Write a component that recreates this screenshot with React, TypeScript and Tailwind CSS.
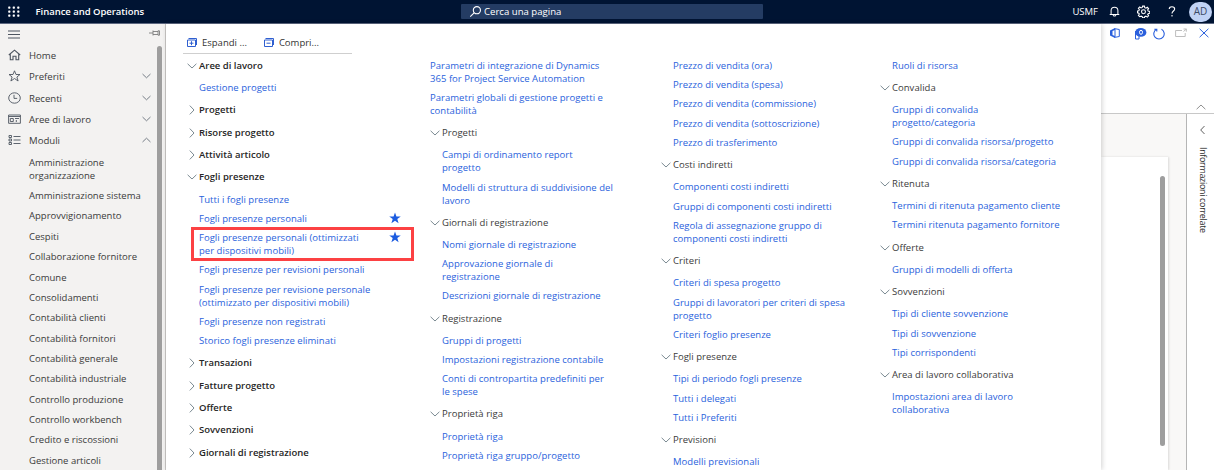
import React from "react";

type Entry = { text: string; starred?: boolean; boxed?: boolean };
type Group = { title?: string; open?: boolean; links?: Entry[] };

const link = (text: string): Entry => ({ text });

const workspaceGroups: Group[] = [
  { title: "Aree di lavoro", open: true, links: [link("Gestione progetti")] },
  { title: "Progetti" },
  { title: "Risorse progetto" },
  { title: "Attività articolo" },
  {
    title: "Fogli presenze",
    open: true,
    links: [
      link("Tutti i fogli presenze"),
      { text: "Fogli presenze personali", starred: true },
      { text: "Fogli presenze personali (ottimizzati\nper dispositivi mobili)", starred: true, boxed: true },
      link("Fogli presenze per revisioni personali"),
      link("Fogli presenze per revisione personale\n(ottimizzato per dispositivi mobili)"),
      link("Fogli presenze non registrati"),
      link("Storico fogli presenze eliminati"),
    ],
  },
  { title: "Transazioni" },
  { title: "Fatture progetto" },
  { title: "Offerte" },
  { title: "Sovvenzioni" },
  { title: "Giornali di registrazione" },
];

const setupGroups: Group[] = [
  {
    title: "Progetti",
    open: true,
    links: [link("Campi di ordinamento report\nprogetto"), link("Modelli di struttura di suddivisione del\nlavoro")],
  },
  {
    title: "Giornali di registrazione",
    open: true,
    links: [
      link("Nomi giornale di registrazione"),
      link("Approvazione giornale di\nregistrazione"),
      link("Descrizioni giornale di registrazione"),
    ],
  },
  {
    title: "Registrazione",
    open: true,
    links: [
      link("Gruppi di progetti"),
      link("Impostazioni registrazione contabile"),
      link("Conti di contropartita predefiniti per\nle spese"),
    ],
  },
  { title: "Proprietà riga", open: true, links: [link("Proprietà riga"), link("Proprietà riga gruppo/progetto")] },
];

const priceGroups: Group[] = [
  {
    links: [
      link("Prezzo di vendita (ora)"),
      link("Prezzo di vendita (spesa)"),
      link("Prezzo di vendita (commissione)"),
      link("Prezzo di vendita (sottoscrizione)"),
      link("Prezzo di trasferimento"),
    ],
  },
  {
    title: "Costi indiretti",
    open: true,
    links: [
      link("Componenti costi indiretti"),
      link("Gruppi di componenti costi indiretti"),
      link("Regola di assegnazione gruppo di\ncomponenti costi indiretti"),
    ],
  },
  {
    title: "Criteri",
    open: true,
    links: [
      link("Criteri di spesa progetto"),
      link("Gruppi di lavoratori per criteri di spesa\nprogetto"),
      link("Criteri foglio presenze"),
    ],
  },
  {
    title: "Fogli presenze",
    open: true,
    links: [link("Tipi di periodo fogli presenze"), link("Tutti i delegati"), link("Tutti i Preferiti")],
  },
  { title: "Previsioni", open: true, links: [link("Modelli previsionali")] },
];

const validationGroups: Group[] = [
  { links: [link("Ruoli di risorsa")] },
  {
    title: "Convalida",
    open: true,
    links: [
      link("Gruppi di convalida\nprogetto/categoria"),
      link("Gruppi di convalida risorsa/progetto"),
      link("Gruppi di convalida risorsa/categoria"),
    ],
  },
  {
    title: "Ritenuta",
    open: true,
    links: [link("Termini di ritenuta pagamento cliente"), link("Termini ritenuta pagamento fornitore")],
  },
  { title: "Offerte", open: true, links: [link("Gruppi di modelli di offerta")] },
  {
    title: "Sovvenzioni",
    open: true,
    links: [link("Tipi di cliente sovvenzione"), link("Tipi di sovvenzione"), link("Tipi corrispondenti")],
  },
  {
    title: "Area di lavoro collaborativa",
    open: true,
    links: [link("Impostazioni area di lavoro\ncollaborativa")],
  },
];

const modules = [
  "Amministrazione\norganizzazione",
  "Amministrazione sistema",
  "Approvvigionamento",
  "Cespiti",
  "Collaborazione fornitore",
  "Comune",
  "Consolidamenti",
  "Contabilità clienti",
  "Contabilità fornitori",
  "Contabilità generale",
  "Contabilità industriale",
  "Controllo produzione",
  "Controllo workbench",
  "Credito e riscossioni",
  "Gestione articoli",
];

const turns = { down: "", up: "rotate-180", right: "-rotate-90", left: "rotate-90" };

function Chevron({ turn, className = "" }: { turn: keyof typeof turns; className?: string }) {
  return (
    <svg viewBox="0 0 10 6" className={`shrink-0 ${turns[turn]} ${className}`} fill="none" stroke="currentColor">
      <path d="M0.6 0.8 5 5 9.4 0.8" />
    </svg>
  );
}

function LinkRow({ entry }: { entry: Entry }) {
  return (
    <li className="relative pb-[6.4px] tracking-[0.03px] whitespace-pre text-[#2a62dc]">
      <a>{entry.text}</a>
      {entry.starred && (
        <svg viewBox="0 0 24 24" className="absolute -top-[1px] left-[189.5px] h-[12px] w-[12px] fill-[#1c5ce0]">
          <path d="m12 .8 2.9 8h8.6l-6.900 5.200 2.600 8.700L12 17.500l-7.200 5.200 2.600-8.700L.5 8.800h8.600z" />
        </svg>
      )}
      {entry.boxed && <span className="absolute -top-[5px] -left-[8px] h-[34px] w-[223px] border-[3px] border-[#fc4143]" />}
    </li>
  );
}

function GroupBlock({ group, strong }: { group: Group; strong?: boolean }) {
  return (
    <section>
      {group.title && (
        <h3 className={`flex h-[22.33px] items-start ${strong ? "font-semibold text-[#262626]" : "font-medium tracking-[0.03px] text-[#3b3b3b]"}`}>
          <span className="-ml-[12px] flex h-[12px] w-[12px] items-center text-[#7b8a92]">
            {group.open ? (
              <Chevron turn="down" className="h-[6px] w-[10px]" />
            ) : (
              <Chevron turn="right" className="h-[6px] w-[10px]" />
            )}
          </span>
          {group.title}
        </h3>
      )}
      {group.links && (
        <ul className="pb-[2.75px]">
          {group.links.map((entry) => (
            <LinkRow key={entry.text} entry={entry} />
          ))}
        </ul>
      )}
    </section>
  );
}

function Header() {
  return (
    <header className="flex h-[24px] shrink-0 items-center border-b border-[#5c6780] bg-[#001433] text-white">
      <svg viewBox="0 0 12 11" className="ml-[8px] h-[11px] w-[12px] fill-white">
        {[0.5, 4.5, 8.5].map((y) =>
          [0.2, 4.7, 9.2].map((x) => <rect key={`${x}-${y}`} x={x} y={y} width="2.2" height="2.2" rx="0.6" />),
        )}
      </svg>
      <div className="ml-[15.5px] w-[425px] pt-[2px] text-[9.5px] font-semibold tracking-[-0.03px]">Finance and Operations</div>
      <div className="flex h-[15px] w-[302px] items-center rounded-[1px] bg-[#243c63] pl-[8.5px] text-[9.6px] font-medium">
        <svg viewBox="0 0 13 12" className="mr-[2px] h-[11px] w-[13px]" fill="none" stroke="white" strokeWidth="1.2">
          <circle cx="8" cy="4.6" r="3.9" />
          <path d="M5.2 7.3.8 11.5" />
        </svg>
        <span className="pt-[2px]">Cerca una pagina</span>
      </div>
      <div className="ml-auto flex items-center">
        <span className="pt-[2px] text-[9.5px] font-medium">USMF</span>
        <svg viewBox="0 0 12 12" className="ml-[11px] h-[11px] w-[11px]" fill="none" stroke="white" strokeWidth="1.1">
          <path d="M.8 9.3h10.4M2.3 9.2V5a3.7 3.7 0 0 1 7.4 0v4.2M4.5 9.5a1.5 1.5 0 0 0 3 0" />
        </svg>
        <svg viewBox="0 0 24 24" className="ml-[17px] h-[13px] w-[13px]" fill="none" stroke="white" strokeWidth="2">
          <path d="m10.3 2 3.4 0 .6 3 2.2.9 2.5-1.7 2.4 2.4-1.700 2.5.9 2.2 3 .6v3.4l-3 .6-.9 1.5 1.7 2.5-2.4 2.4-2.5-1.7-2.2.9-.6 2h-3.4l-.6-2-2.2-.9L5 21.5l-2.4-2.4 1.7-2.5-.9-1.5-2.4-.6v-3.4l2.4-.6.9-2.2L2.6 6 5 3.6l2.5 1.700 2.2-.9z" />
          <circle cx="12" cy="12.500" r="3.600" />
        </svg>
        <svg viewBox="0 0 8 12" className="ml-[18px] h-[11px] w-[8px]" fill="none" stroke="white" strokeWidth="1.2">
          <path d="M1 3.3C1 1.6 2.2.8 3.9.8 5.7.8 6.9 1.7 6.9 3.2c0 2.2-2.9 2.4-2.9 5M4 9.9v1.5" />
        </svg>
        <span className="mr-[2px] ml-[13px] flex h-[20px] w-[23px] items-center justify-center rounded-full bg-[#c0d2f5] text-[10px] text-[#3c4a66]">
          AD
        </span>
      </div>
    </header>
  );
}

const navIcons: Record<string, React.ReactNode> = {
  Home: <path strokeWidth="1.1" d="M.8 6 6.500 1.200 12.200 6M2.300 5v5.700h2.700V7.200h3v3.500h2.700V5" />,
  Preferiti: <path d="m6.500.8 1.500 3.700h4L8.900 7l1.200 4-3.600-2.500L2.900 11l1.200-4L1 4.500h4z" />,
  Recenti: (
    <>
      <ellipse cx="6.500" cy="6" rx="5.800" ry="5.200" />
      <path d="M6 2.800v3.600h3.200" />
    </>
  ),
  "Aree di lavoro": (
    <>
      <path d="M.6 2h11.800v8.300H.6zM.6 3.500h11.800" />
      <path d="M2.300 5.500h3v3h-3zM7 5.500h4M8.300 7v2" />
    </>
  ),
  Moduli: <path d="M1 1.500h2.500v2H1zM1 5h2.500v2H1zM1 8.500h2.500v2H1zM5.500 2.500h7M5.500 6h7M5.500 9.500h7" />,
};

function Sidebar() {
  return (
    <aside className="flex w-[166px] shrink-0 border-r border-[#c9c7c5] bg-[#f3f2f1] text-[#3a3a3a]">
      <div className="flex w-[157px] flex-col">
        <div className="flex h-[20.5px] shrink-0 items-start justify-between pl-[8px]">
          <svg viewBox="0 0 12 9" className="mt-[6px] h-[9px] w-[12px]" stroke="#4d5560">
            <path d="M0 1h12M0 4.500h12M0 8h12" />
          </svg>
          <svg viewBox="0 0 11 6" className="mt-[6px] -mr-[3px] h-[6px] w-[11px]" fill="none" stroke="#7d7d7d" strokeWidth="0.9">
            <path d="M0 3h4M4 .5v5M4 1.500h5M4 4.500h5M9 .8v4.400h1.500V.8z" />
          </svg>
        </div>
        <nav className="shrink-0 text-[9.6px]">
          {Object.entries(navIcons).map(([name, icon]) => (
            <div key={name} className="flex h-[21.3px] items-center pl-[8px]">
              <svg viewBox="0 0 13 12" className="h-[12px] w-[13px]" fill="none" stroke="#4d5560" strokeWidth="0.9">
                {icon}
              </svg>
              <span className="ml-[8px] flex-1 pt-[2px]">{name}</span>
              {name !== "Home" && <Chevron turn={name === "Moduli" ? "up" : "down"} className="mr-[6px] h-[6px] w-[9px] text-[#68717a]" />}
            </div>
          ))}
        </nav>
        <ul className="pt-[4.8px] pl-[29px] text-[9.5px] leading-[13px]">
          {modules.map((name) => (
            <li key={name} className="pb-[7.35px] whitespace-pre">
              {name}
            </li>
          ))}
        </ul>
      </div>
      <div className="mt-[22px] w-[5px] rounded-t-full bg-[#9e9e9e]" />
    </aside>
  );
}

function TreeAction({ label, plus }: { label: string; plus?: boolean }) {
  return (
    <div className="flex items-center gap-[5px]">
      <svg viewBox="0 0 10 9" className="h-[9px] w-[10px]" fill="none" stroke="#2f5fd0">
        <path d="M.5 2h8v6.500h-8zM1.500.5h8V7M2.500 5.200h4" />
        {plus && <path d="M4.500 3.200v4" />}
      </svg>
      <span className="pt-[3px]">{label}</span>
    </div>
  );
}

function MenuPanel() {
  return (
    <main className="z-10 w-[935px] shrink-0 bg-white shadow-[1px_0_5px_rgba(0,0,0,0.18)]">
      <div className="ml-[17px] flex h-[30px] w-[169px] items-center gap-[17px] border-b-[1.5px] border-[#cfcfcf] pt-[7px] pl-[4px] text-[9.5px] font-medium text-[#333]">
        <TreeAction label="Espandi ..." plus />
        <TreeAction label="Compri..." />
      </div>
      <div className="grid grid-cols-[243px_231px_219px_1fr] pt-[5.8px] pl-[33px] text-[9.5px] leading-[12.92px]">
        <div>
          {workspaceGroups.map((group) => (
            <GroupBlock key={group.title} group={group} strong />
          ))}
        </div>
        <div>
          <ul className="-ml-[12px] pb-[2.75px]">
            <LinkRow entry={link("Parametri di integrazione di Dynamics\n365 for Project Service Automation")} />
            <LinkRow entry={link("Parametri globali di gestione progetti e\ncontabilità")} />
          </ul>
          {setupGroups.map((group) => (
            <GroupBlock key={group.title} group={group} />
          ))}
        </div>
        <div>
          {priceGroups.map((group, i) => (
            <GroupBlock key={i} group={group} />
          ))}
        </div>
        <div>
          {validationGroups.map((group, i) => (
            <GroupBlock key={i} group={group} />
          ))}
        </div>
      </div>
    </main>
  );
}

function Workspace() {
  return (
    <div className="flex flex-1 flex-col">
      <div className="flex h-[90px] shrink-0 flex-col justify-between border-b border-[#c8c8c8]">
        <div className="flex items-start pt-[4px] pl-[9px] text-[#2b60dd]">
          <svg viewBox="0 0 10 10" className="h-[10px] w-[10px]">
            <path fill="currentColor" d="M5 0 0 2.500v5L5 10V8L2.500 7V3L5 2z" />
            <path fill="none" stroke="currentColor" d="M4.500.6 9.300 1.500v7l-4.800.9M5 1v8" />
          </svg>
          <svg viewBox="0 0 13 12" className="ml-[14px] h-[12px] w-[13px]">
            <path d="M1.500 3v8h3.500V8" fill="none" stroke="currentColor" />
            <ellipse cx="6.800" cy="4.400" rx="5.600" ry="4.300" fill="currentColor" />
            <ellipse cx="7" cy="4.300" rx="1.500" ry="2" fill="none" stroke="white" strokeWidth="1" />
          </svg>
          <svg viewBox="0 0 12 12" className="ml-[6px] h-[12px] w-[12px]" fill="none" stroke="currentColor" strokeWidth="1.1">
            <path d="M8.500 1.300a5.200 5.200 0 1 1-5 0M3.800 3.600V1.200H1.300" />
          </svg>
          <svg viewBox="0 0 12 10" className="ml-[10px] h-[10px] w-[12px]" fill="none" stroke="#bdbdbd">
            <path d="M7 2.500H.6v6h9.600V5M8.500 1h2.800v2.700M11.300 1 8.500 3.500" />
          </svg>
          <svg viewBox="0 0 10 10" className="ml-[12px] h-[10px] w-[10px]" fill="none" stroke="currentColor">
            <path d="m.6.8 8.800 8.400M9.400.8.6 9.200" />
          </svg>
        </div>
        <Chevron turn="up" className="mr-[8px] mb-[3px] h-[6px] w-[10px] self-end text-[#8f8f8f]" />
      </div>
      <div className="flex flex-1">
        <div className="flex-1 bg-[#f9f8f7] pt-[43px]">
          <div className="flex h-full w-[67px] justify-end bg-white pt-[19px] pr-[3px] shadow-[1px_0_2px_rgba(0,0,0,0.12)]">
            <div className="h-[270px] w-[5px] rounded-full bg-[#9e9e9e]" />
          </div>
        </div>
        <div className="flex w-[28px] flex-col items-center border-l border-[#b5b5b5] bg-white pt-[13px] pl-[4px]">
          <Chevron turn="left" className="h-[6px] w-[9px] text-[#4d4d4d]" />
          <span className="mt-[14px] text-[9px] leading-[12px] font-medium tracking-[-0.34px] whitespace-nowrap text-[#2e2e2e] [writing-mode:vertical-rl]">
            Informazioni correlate
          </span>
        </div>
      </div>
    </div>
  );
}

export default function App() {
  return (
    <div className="flex h-[470px] w-[1214px] flex-col overflow-hidden bg-white font-['Open_Sans','Noto_Sans',sans-serif]">
      <Header />
      <div className="flex min-h-0 flex-1">
        <Sidebar />
        <MenuPanel />
        <Workspace />
      </div>
    </div>
  );
}
